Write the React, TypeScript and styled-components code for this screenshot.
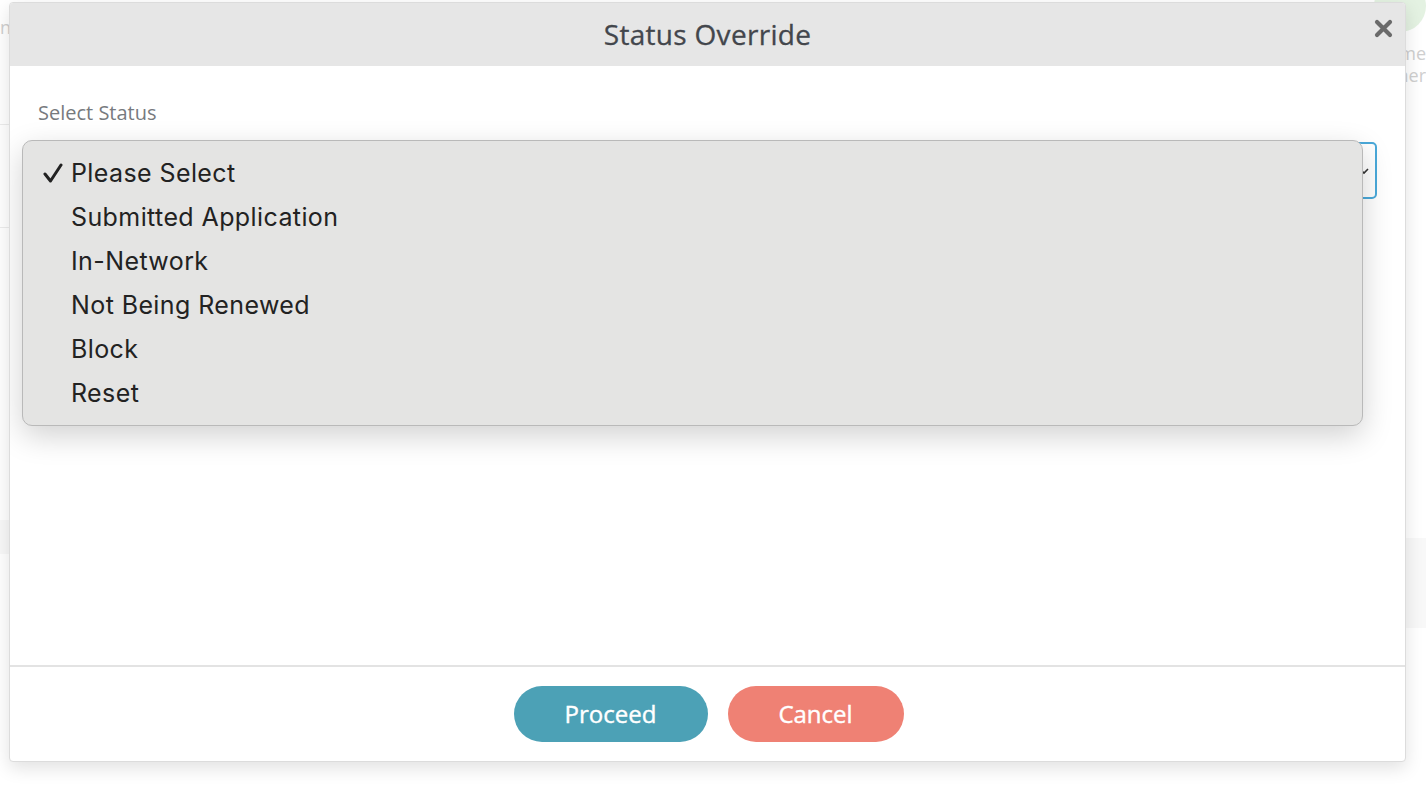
import React from 'react';
import styled, {createGlobalStyle} from "styled-components";

const GlobalStyle = createGlobalStyle`
  html, body {
    margin: 0;
    padding: 0;
    background: #ffffff;
  }
  * { box-sizing: border-box; }
`;

const options = ["Please Select", "Submitted Application", "In-Network", "Not Being Renewed", "Block", "Reset"];

const Page = styled.div`
  position: relative;
  width: 1426px;
  height: 800px;
  overflow: hidden;
  background: #fff;
  font-family: "Open Sans", "Noto Sans", sans-serif;
`;

/* faint page that sits behind the modal */
const Behind = styled.div`
  display: flex;
  justify-content: space-between;
  height: 100%;
  color: #c9c9c9;
  font-size: 18px;
`;

const BehindLeft = styled.div`
  width: 9px;
  display: flex;
  flex-direction: column;
  overflow: hidden;
`;

const BehindRight = styled.div`
  width: 60px;
  display: flex;
  flex-direction: column;
  align-items: flex-end;
  overflow: hidden;
`;

const GhostText = styled.div<{ $top: number }>`
  margin-top: ${p => p.$top}px;
  line-height: 22px;
  white-space: nowrap;
  color: #cfcfcf;
`;

const GhostLine = styled.div<{ $top: number; $h?: number }>`
  margin-top: ${p => p.$top}px;
  height: ${p => p.$h ?? 1}px;
  width: 100%;
  background: ${p => (p.$h ? "#f8f8f8" : "#ececec")};
`;

const GreenDot = styled.div`
  width: 52px;
  height: 52px;
  margin-top: -20px;
  border-radius: 50%;
  background: #e4f2e2;
`;

const Overlay = styled.div`
  position: absolute;
  inset: 0;
  padding: 2px 0 0 9px;
`;

const Modal = styled.div`
  width: 1397px;
  height: 760px;
  background: #fff;
  border: 1px solid #dcdcdc;
  border-radius: 4px;
  box-shadow: 0 6px 18px rgba(0, 0, 0, 0.12);
  display: flex;
  flex-direction: column;
  overflow: hidden;
`;

const Header = styled.div`
  position: relative;
  height: 63px;
  flex: none;
  background: #e6e6e6;
  display: flex;
  align-items: center;
  justify-content: center;
`;

const Title = styled.h2`
  margin: 0 0 2px;
  font-size: 28px;
  font-weight: 500;
  color: #43464c;
  letter-spacing: 0.3px;
  -webkit-text-stroke: 0.3px #43464c;
`;

const CloseButton = styled.button`
  position: absolute;
  right: 11px;
  top: 14px;
  width: 22px;
  height: 22px;
  padding: 0;
  border: none;
  background: transparent;
  cursor: pointer;
  display: flex;
  align-items: center;
  justify-content: center;
`;

const Body = styled.div`
  position: relative;
  flex: 1;
  padding: 34px 28px 0 28px;
`;

const Label = styled.label`
  display: block;
  font-size: 20px;
  line-height: 26px;
  color: #777a7e;
  margin-bottom: 16px;
`;

const SelectField = styled.div`
  height: 57px;
  border: 2px solid #4aa9da;
  border-radius: 5px;
  display: flex;
  align-items: center;
  justify-content: flex-end;
  padding-right: 6px;
`;

const Popup = styled.ul`
  position: absolute;
  left: 12px;
  top: 74px;
  width: 1341px;
  margin: 0;
  padding: 10px 0;
  list-style: none;
  background: #e4e4e3;
  border: 1px solid #b9b9b9;
  border-radius: 10px;
  box-shadow: 0 10px 30px rgba(0, 0, 0, 0.18);
`;

const Option = styled.li`
  height: 44px;
  display: flex;
  align-items: center;
  font-family: Inter, "Noto Sans", sans-serif;
  font-size: 25px;
  letter-spacing: 0.4px;
  color: #222;
`;

const CheckCell = styled.span`
  width: 48px;
  padding-left: 20px;
  display: flex;
  align-items: center;
`;

const Footer = styled.div`
  height: 96px;
  flex: none;
  border-top: 2px solid #e3e3e3;
  display: flex;
  align-items: center;
  justify-content: center;
  gap: 20px;
  padding-left: 2px;
`;

const Pill = styled.button<{ $tone: "go" | "stop"; $w: number }>`
  width: ${p => p.$w}px;
  height: 56px;
  border: none;
  border-radius: 28px;
  background: ${p => (p.$tone === "go" ? "#4ca1b6" : "#ef8174")};
  color: #fff;
  font-family: "Open Sans", "Noto Sans", sans-serif;
  font-size: 24px;
  font-weight: 500;
  -webkit-text-stroke: 0.4px #fff;
  cursor: pointer;
  padding: 0 0 2px;
`;

const Check = () => (
    <svg width="20" height="20" viewBox="0 0 20 20">
        <path d="M2 11 L7.5 18 L18 2" fill="none" stroke="#222" strokeWidth="3" strokeLinecap="round" strokeLinejoin="round"/>
    </svg>
);

const CloseIcon = () => (
    <svg width="19" height="19" viewBox="0 0 19 19">
        <path d="M3 3 L16 16 M16 3 L3 16" stroke="#6a6a6a" strokeWidth="4.2" strokeLinecap="round"/>
    </svg>
);

const Chevron = () => (
    <svg width="10" height="8" viewBox="0 0 10 8">
        <path d="M1 2 L5 6 L9 2" fill="none" stroke="#333" strokeWidth="1.6"/>
    </svg>
);

export default function App() {
    return (
        <Page>
            <GlobalStyle/>
            <Behind>
                <BehindLeft>
                    <GhostText $top={16}>n</GhostText>
                    <GhostLine $top={86}/>
                    <GhostLine $top={102}/>
                    <GhostLine $top={292} $h={34}/>
                </BehindLeft>
                <BehindRight>
                    <GreenDot/>
                    <GhostText $top={10}>me</GhostText>
                    <GhostText $top={0}>ner</GhostText>
                    <GhostLine $top={452} $h={90}/>
                </BehindRight>
            </Behind>
            <Overlay>
                <Modal>
                    <Header>
                        <Title>Status Override</Title>
                        <CloseButton aria-label="close"><CloseIcon/></CloseButton>
                    </Header>
                    <Body>
                        <Label>Select Status</Label>
                        <SelectField><Chevron/></SelectField>
                        <Popup>
                            {options.map((o, i) => (
                                <Option key={o}>
                                    <CheckCell>{i === 0 ? <Check/> : null}</CheckCell>
                                    {o}
                                </Option>
                            ))}
                        </Popup>
                    </Body>
                    <Footer>
                        <Pill $tone="go" $w={194}>Proceed</Pill>
                        <Pill $tone="stop" $w={176}>Cancel</Pill>
                    </Footer>
                </Modal>
            </Overlay>
        </Page>
    );
}
